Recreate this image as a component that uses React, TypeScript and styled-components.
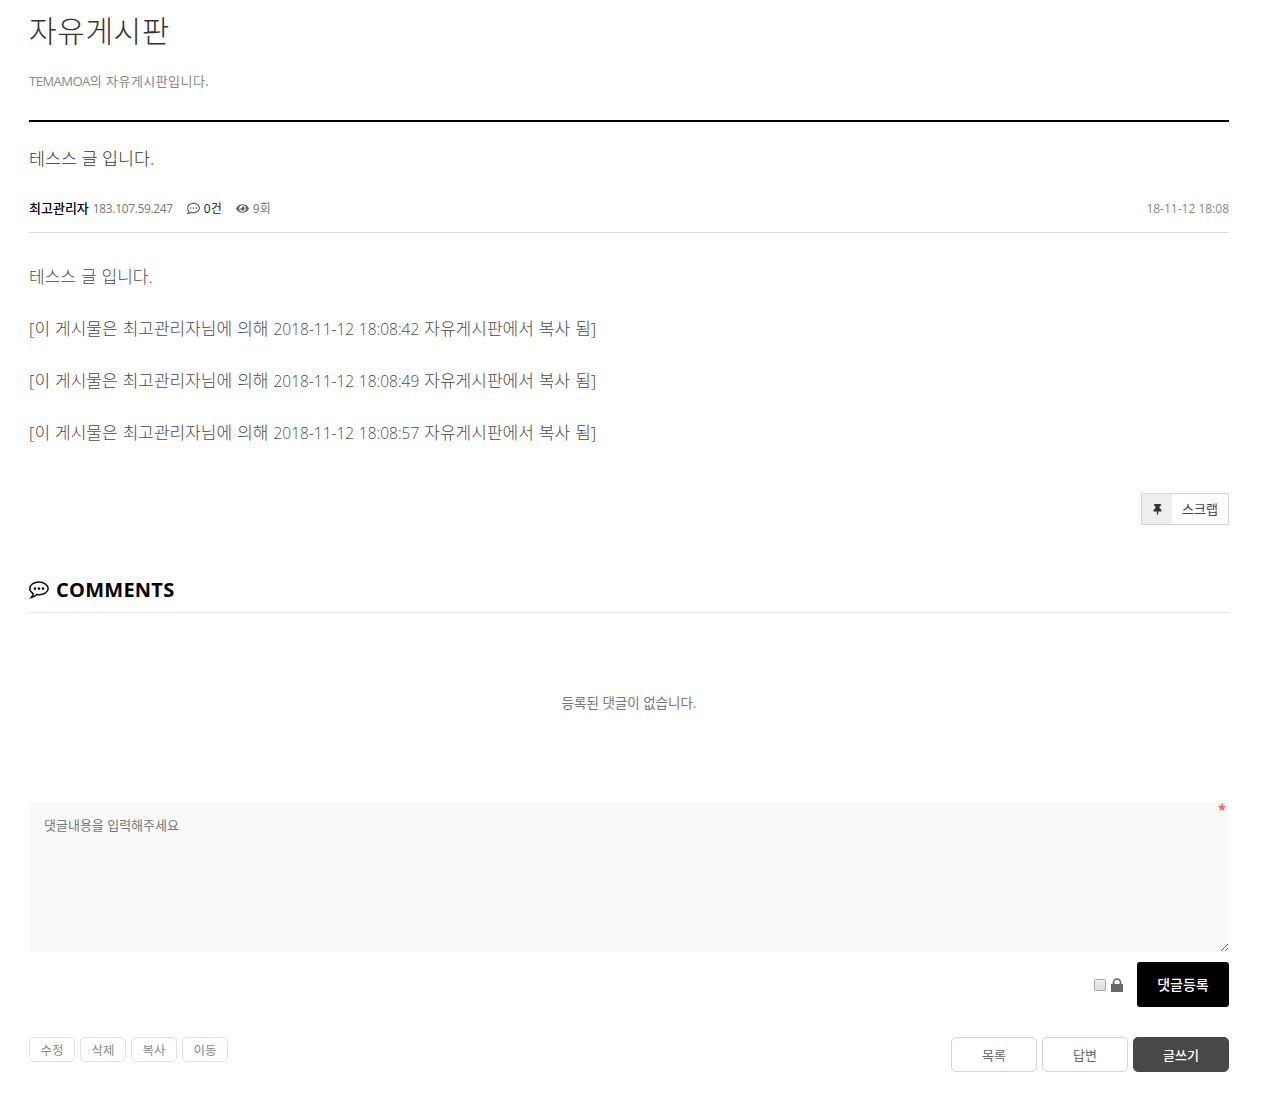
import React from "react";
import styled, { createGlobalStyle } from "styled-components";
import { FaEye, FaRegCommentDots, FaThumbtack } from "react-icons/fa";

const Global = createGlobalStyle`
    html, body {
        margin: 0;
        padding: 0;
        background: #fff;
    }
    body {
        font-family: "Open Sans", "Noto Sans CJK KR", sans-serif;
        color: #555;
    }
    * {
        box-sizing: border-box;
    }
`;

const Page = styled.div`
    width: 1200px;
    margin-left: 29px;
    height: 1100px;
`;

const BoardHead = styled.header`
    height: 122px;
    border-bottom: 2px solid #000;
    h1 {
        margin: 0;
        padding-top: 10px;
        height: 72px;
        font-size: 30px;
        line-height: 42px;
        letter-spacing: 0.6px;
        font-weight: 300;
        color: #333;
    }
    p {
        margin: 0;
        font-size: 13px;
        line-height: 18px;
        letter-spacing: 0.45px;
        color: #888;
    }
    p b {
        font-weight: 400;
        letter-spacing: -0.5px;
    }
`;

const Subject = styled.h2`
    margin: 0;
    height: 72px;
    padding-top: 23px;
    font-size: 17.4px;
    line-height: 26px;
    font-weight: 300;
    color: #333;
`;

const Meta = styled.div`
    height: 39px;
    padding-bottom: 10px;
    display: flex;
    align-items: center;
    border-bottom: 1px solid #ddd;
    font-size: 12px;
    color: #777;
`;

const Writer = styled.strong`
    color: #000;
    font-size: 13px;
    line-height: 16px;
    font-weight: 500;
    margin-right: 4px;
    margin-bottom: 1px;
`;

const Ip = styled.span`
    letter-spacing: -0.35px;
`;

const Stat = styled.span<{ $dark?: boolean }>`
    display: inline-flex;
    align-items: center;
    gap: 4px;
    margin-left: 14px;
    color: ${(p) => (p.$dark ? "#222" : "#777")};
    svg {
        font-size: 13px;
        color: #666;
    }
`;

const Date = styled.span`
    margin-left: auto;
    color: #888;
`;

const Content = styled.div`
    padding-top: 31px;
    p {
        margin: 0 0 26px;
        font-size: 17px;
        line-height: 26px;
        word-spacing: 0.6px;
        font-weight: 300;
        color: #4a4a4a;
    }
    p span {
        font-size: 15.5px;
    }
`;

const ScrapRow = styled.div`
    display: flex;
    justify-content: flex-end;
    margin-top: 47px;
`;

const ScrapButton = styled.a`
    display: flex;
    width: 88px;
    height: 32px;
    border: 1px solid #d5d5d5;
    font-size: 13px;
    color: #444;
`;

const ScrapIcon = styled.span`
    width: 30px;
    background: #eee;
    display: flex;
    align-items: center;
    justify-content: center;
    font-size: 11px;
    color: #333;
`;

const ScrapLabel = styled.span`
    flex: 1;
    display: flex;
    align-items: center;
    justify-content: center;
    padding-bottom: 1px;
`;

const CommentsHead = styled.h3`
    margin: 50px 0 0;
    height: 38px;
    padding-bottom: 8px;
    display: flex;
    align-items: center;
    gap: 7px;
    border-bottom: 1px solid #e2e2e2;
    font-size: 20px;
    letter-spacing: 0.25px;
    font-weight: 700;
    color: #000;
`;

const Empty = styled.p`
    margin: 0;
    height: 189px;
    padding-top: 80px;
    text-align: center;
    font-size: 13.5px;
    line-height: 20px;
    color: #777;
`;

const CommentBox = styled.div`
    position: relative;
    height: 150px;
`;

const Textarea = styled.textarea`
    display: block;
    width: 100%;
    height: 150px;
    padding: 14px 15px;
    border: 0;
    outline: 0;
    background: #f9f9f9;
    font-family: "Open Sans", "Noto Sans CJK KR", sans-serif;
    font-size: 13px;
    line-height: 18px;
    color: #555;
    &::placeholder {
        color: #777;
    }
`;

const Required = styled.span`
    position: absolute;
    top: 0;
    right: 3px;
    font-size: 14px;
    line-height: 16px;
    font-weight: 700;
    color: #f55;
`;

const SubmitRow = styled.div`
    display: flex;
    justify-content: flex-end;
    align-items: center;
    margin-top: 10px;
    height: 45px;
`;

const Secret = styled.label`
    display: flex;
    align-items: center;
    gap: 5px;
    margin-right: 14px;
    input {
        appearance: none;
        width: 12px;
        height: 12px;
        margin: 0;
        border: 1px solid #aaa;
        border-radius: 2px;
        background: linear-gradient(#eee, #ddd);
    }
`;

const Submit = styled.button`
    width: 92px;
    height: 45px;
    padding: 0 0 2px;
    border: 0;
    border-radius: 3px;
    background: #000;
    color: #fff;
    font-family: inherit;
    font-size: 14px;
    font-weight: 500;
`;

const Footer = styled.div`
    display: flex;
    justify-content: space-between;
    margin-top: 30px;
`;

const Group = styled.div<{ $gap: number }>`
    display: flex;
    align-items: flex-start;
    gap: ${(p) => p.$gap}px;
`;

const SmallButton = styled.a`
    display: flex;
    align-items: center;
    justify-content: center;
    width: 46px;
    height: 25px;
    border: 1px solid #e0e0e0;
    border-radius: 5px;
    font-size: 12.5px;
    color: #888;
`;

const BigButton = styled.a<{ $w: number; $dark?: boolean }>`
    display: flex;
    align-items: center;
    justify-content: center;
    width: ${(p) => p.$w}px;
    height: 35px;
    border: 1px solid ${(p) => (p.$dark ? "#484848" : "#d5d5d5")};
    border-radius: 5px;
    background: ${(p) => (p.$dark ? "#484848" : "#fff")};
    font-size: 13px;
    font-weight: ${(p) => (p.$dark ? 500 : 400)};
    color: ${(p) => (p.$dark ? "#fff" : "#666")};
`;

const CommentIcon = () => (
    <svg width="20" height="18" viewBox="0 0 20 18" fill="none">
        <path
            d="M10 1C5 1 .8 3.800.8 7.600c0 2.100 1.400 3.900 3.500 5-.2 1.500-.9 2.800-2.100 4 2.200-.3 4.300-1.500 5.700-3 .7.1 1.300.1 2.100.1 5 0 9.200-2.700 9.200-6.100S15 1 10 1z"
            stroke="#111"
            strokeWidth="1.500"
        />
        <circle cx="6" cy="7.600" r="1.300" fill="#111" />
        <circle cx="10" cy="7.600" r="1.300" fill="#111" />
        <circle cx="14" cy="7.600" r="1.300" fill="#111" />
    </svg>
);

const LockIcon = () => (
    <svg width="12" height="14" viewBox="0 0 12 14">
        <path d="M0 6h12v8H0z" fill="#666" />
        <path d="M2.500 7V4.500a3.500 3.500 0 0 1 7 0V7" fill="none" stroke="#666" strokeWidth="1.700" />
    </svg>
);

const copies = ["18:08:42", "18:08:49", "18:08:57"];

const App = (): JSX.Element => {
    return (
        <Page>
            <Global />
            <BoardHead>
                <h1>자유게시판</h1>
                <p>
                    <b>TEMAMOA</b>의 자유게시판입니다.
                </p>
            </BoardHead>
            <Subject>테스스 글 입니다.</Subject>
            <Meta>
                <Writer>최고관리자</Writer>
                <Ip>183.107.59.247</Ip>
                <Stat $dark>
                    <FaRegCommentDots /> 0건
                </Stat>
                <Stat>
                    <FaEye /> 9회
                </Stat>
                <Date>18-11-12 18:08</Date>
            </Meta>
            <Content>
                <p>테스스 글 입니다.</p>
                {copies.map((time) => (
                    <p key={time}>
                        [이 게시물은 최고관리자님에 의해 <span>2018-11-12 {time}</span> 자유게시판에서 복사 됨]
                    </p>
                ))}
            </Content>
            <ScrapRow>
                <ScrapButton>
                    <ScrapIcon>
                        <FaThumbtack />
                    </ScrapIcon>
                    <ScrapLabel>스크랩</ScrapLabel>
                </ScrapButton>
            </ScrapRow>
            <CommentsHead>
                <CommentIcon /> COMMENTS
            </CommentsHead>
            <Empty>등록된 댓글이 없습니다.</Empty>
            <CommentBox>
                <Textarea placeholder="댓글내용을 입력해주세요" />
                <Required>*</Required>
            </CommentBox>
            <SubmitRow>
                <Secret>
                    <input type="checkbox" />
                    <LockIcon />
                </Secret>
                <Submit>댓글등록</Submit>
            </SubmitRow>
            <Footer>
                <Group $gap={5}>
                    <SmallButton>수정</SmallButton>
                    <SmallButton>삭제</SmallButton>
                    <SmallButton>복사</SmallButton>
                    <SmallButton>이동</SmallButton>
                </Group>
                <Group $gap={5}>
                    <BigButton $w={86}>목록</BigButton>
                    <BigButton $w={86}>답변</BigButton>
                    <BigButton $w={96} $dark>
                        글쓰기
                    </BigButton>
                </Group>
            </Footer>
        </Page>
    );
};

export default App;
